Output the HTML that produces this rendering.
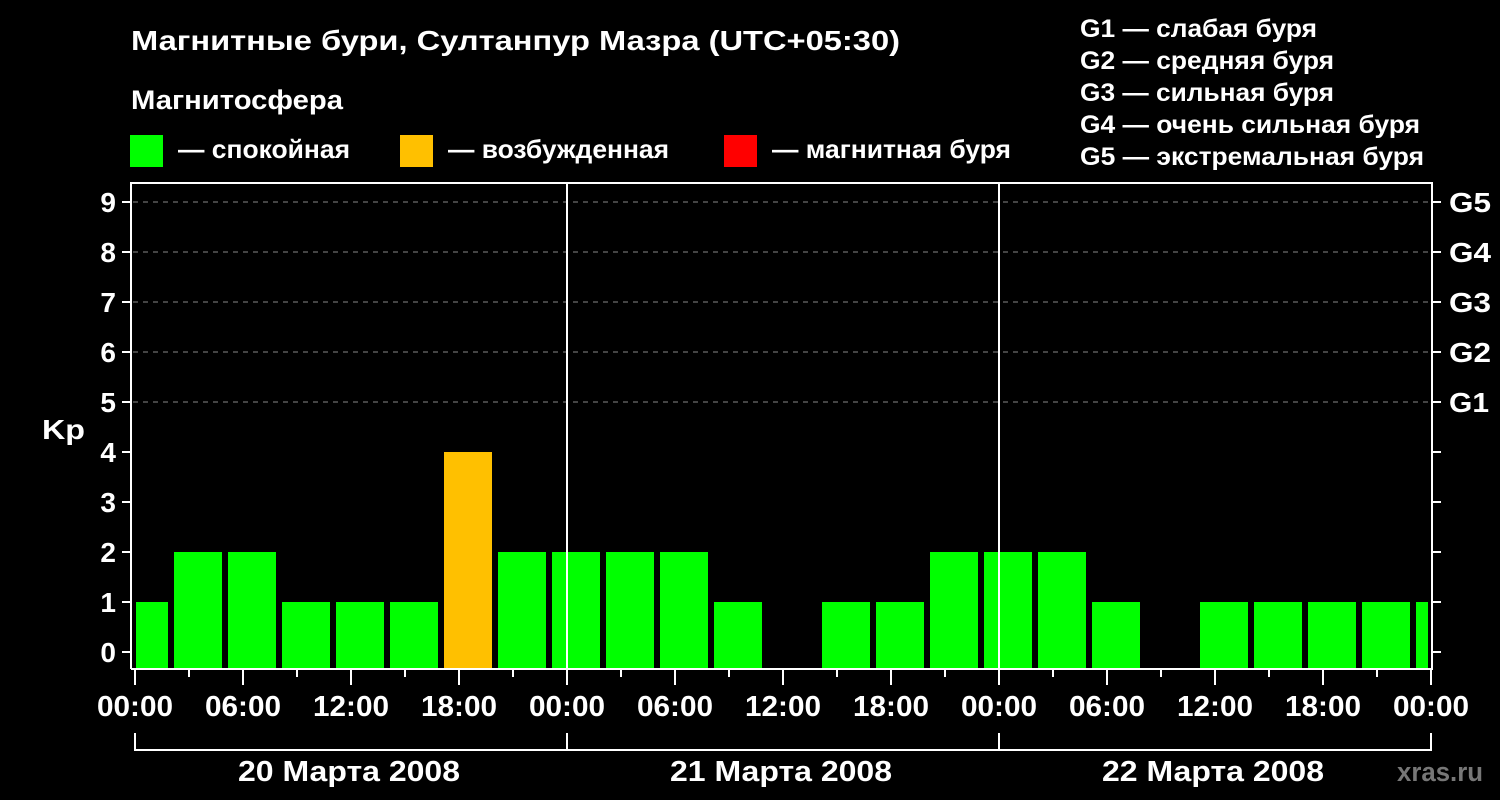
<!DOCTYPE html>
<html><head><meta charset="utf-8"><style>html,body{margin:0;padding:0;background:#000;}svg{display:block}</style></head>
<body>
<svg width="1500" height="800" viewBox="0 0 1500 800" xmlns="http://www.w3.org/2000/svg" font-family="Liberation Sans, Arial, sans-serif" font-weight="bold" fill="#fff">
<rect width="1500" height="800" fill="#000"/>
<text x="131" y="50" font-size="28" textLength="769" lengthAdjust="spacingAndGlyphs">Магнитные бури, Султанпур Мазра (UTC+05:30)</text>
<text x="131" y="109" font-size="27" textLength="212" lengthAdjust="spacingAndGlyphs">Магнитосфера</text>
<rect x="130" y="135" width="33" height="32" fill="#00ff00"/>
<text x="178" y="158" font-size="26" textLength="172" lengthAdjust="spacingAndGlyphs">— спокойная</text>
<rect x="400" y="135" width="33" height="32" fill="#ffc000"/>
<text x="448" y="158" font-size="26" textLength="221" lengthAdjust="spacingAndGlyphs">— возбужденная</text>
<rect x="724" y="135" width="33" height="32" fill="#ff0000"/>
<text x="772" y="158" font-size="26" textLength="239" lengthAdjust="spacingAndGlyphs">— магнитная буря</text>
<g font-size="25">
<text x="1080" y="37" textLength="237" lengthAdjust="spacingAndGlyphs">G1 — слабая буря</text>
<text x="1080" y="69" textLength="254" lengthAdjust="spacingAndGlyphs">G2 — средняя буря</text>
<text x="1080" y="101" textLength="254" lengthAdjust="spacingAndGlyphs">G3 — сильная буря</text>
<text x="1080" y="133" textLength="340" lengthAdjust="spacingAndGlyphs">G4 — очень сильная буря</text>
<text x="1080" y="165" textLength="344" lengthAdjust="spacingAndGlyphs">G5 — экстремальная буря</text>
</g>
<g stroke="#888" stroke-width="1" stroke-dasharray="5,5">
<line x1="133" y1="202" x2="1431" y2="202"/>
<line x1="133" y1="252" x2="1431" y2="252"/>
<line x1="133" y1="302" x2="1431" y2="302"/>
<line x1="133" y1="352" x2="1431" y2="352"/>
<line x1="133" y1="402" x2="1431" y2="402"/>
</g>
<g fill="#00ff00">
<rect x="136" y="602" width="32" height="66"/>
<rect x="174" y="552" width="48" height="116"/>
<rect x="228" y="552" width="48" height="116"/>
<rect x="282" y="602" width="48" height="66"/>
<rect x="336" y="602" width="48" height="66"/>
<rect x="390" y="602" width="48" height="66"/>
<rect x="444" y="452" width="48" height="216" fill="#ffc000"/>
<rect x="498" y="552" width="48" height="116"/>
<rect x="552" y="552" width="48" height="116"/>
<rect x="606" y="552" width="48" height="116"/>
<rect x="660" y="552" width="48" height="116"/>
<rect x="714" y="602" width="48" height="66"/>
<rect x="822" y="602" width="48" height="66"/>
<rect x="876" y="602" width="48" height="66"/>
<rect x="930" y="552" width="48" height="116"/>
<rect x="984" y="552" width="48" height="116"/>
<rect x="1038" y="552" width="48" height="116"/>
<rect x="1092" y="602" width="48" height="66"/>
<rect x="1200" y="602" width="48" height="66"/>
<rect x="1254" y="602" width="48" height="66"/>
<rect x="1308" y="602" width="48" height="66"/>
<rect x="1362" y="602" width="48" height="66"/>
<rect x="1416" y="602" width="12" height="66"/>
</g>
<g stroke="#fff" stroke-width="2" fill="none">
<polyline points="131,669 131,183 1432,183 1432,669 131,669"/>
<line x1="567" y1="183" x2="567" y2="668"/>
<line x1="999" y1="183" x2="999" y2="668"/>
</g>
<g stroke="#fff" stroke-width="2">
<line x1="122" y1="202" x2="131" y2="202"/><line x1="122" y1="252" x2="131" y2="252"/><line x1="122" y1="302" x2="131" y2="302"/><line x1="122" y1="352" x2="131" y2="352"/><line x1="122" y1="402" x2="131" y2="402"/><line x1="122" y1="452" x2="131" y2="452"/><line x1="122" y1="502" x2="131" y2="502"/><line x1="122" y1="552" x2="131" y2="552"/><line x1="122" y1="602" x2="131" y2="602"/><line x1="122" y1="652" x2="131" y2="652"/>
<line x1="1432" y1="202" x2="1441" y2="202"/><line x1="1432" y1="252" x2="1441" y2="252"/><line x1="1432" y1="302" x2="1441" y2="302"/><line x1="1432" y1="352" x2="1441" y2="352"/><line x1="1432" y1="402" x2="1441" y2="402"/><line x1="1432" y1="452" x2="1441" y2="452"/><line x1="1432" y1="502" x2="1441" y2="502"/><line x1="1432" y1="552" x2="1441" y2="552"/><line x1="1432" y1="602" x2="1441" y2="602"/><line x1="1432" y1="652" x2="1441" y2="652"/>
<line x1="135" y1="669" x2="135" y2="685"/><line x1="189" y1="669" x2="189" y2="677"/><line x1="243" y1="669" x2="243" y2="685"/><line x1="297" y1="669" x2="297" y2="677"/><line x1="351" y1="669" x2="351" y2="685"/><line x1="405" y1="669" x2="405" y2="677"/><line x1="459" y1="669" x2="459" y2="685"/><line x1="513" y1="669" x2="513" y2="677"/>
<line x1="567" y1="669" x2="567" y2="685"/><line x1="621" y1="669" x2="621" y2="677"/><line x1="675" y1="669" x2="675" y2="685"/><line x1="729" y1="669" x2="729" y2="677"/><line x1="783" y1="669" x2="783" y2="685"/><line x1="837" y1="669" x2="837" y2="677"/><line x1="891" y1="669" x2="891" y2="685"/><line x1="945" y1="669" x2="945" y2="677"/>
<line x1="999" y1="669" x2="999" y2="685"/><line x1="1053" y1="669" x2="1053" y2="677"/><line x1="1107" y1="669" x2="1107" y2="685"/><line x1="1161" y1="669" x2="1161" y2="677"/><line x1="1215" y1="669" x2="1215" y2="685"/><line x1="1269" y1="669" x2="1269" y2="677"/><line x1="1323" y1="669" x2="1323" y2="685"/><line x1="1377" y1="669" x2="1377" y2="677"/><line x1="1431" y1="669" x2="1431" y2="685"/>
</g>
<g stroke="#fff" stroke-width="2" fill="none">
<polyline points="135,733 135,750 1431,750 1431,733"/>
<line x1="567" y1="733" x2="567" y2="750"/>
<line x1="999" y1="733" x2="999" y2="750"/>
</g>
<g font-size="28" text-anchor="end">
<text x="116" y="212">9</text><text x="116" y="262">8</text><text x="116" y="312">7</text><text x="116" y="362">6</text><text x="116" y="412">5</text><text x="116" y="462">4</text><text x="116" y="512">3</text><text x="116" y="562">2</text><text x="116" y="612">1</text><text x="116" y="662">0</text>
</g>
<text x="42" y="439" font-size="28" textLength="43" lengthAdjust="spacingAndGlyphs">Kp</text>
<g font-size="28">
<text x="1449" y="212" textLength="42" lengthAdjust="spacingAndGlyphs">G5</text><text x="1449" y="262" textLength="42" lengthAdjust="spacingAndGlyphs">G4</text><text x="1449" y="312" textLength="42" lengthAdjust="spacingAndGlyphs">G3</text><text x="1449" y="362" textLength="42" lengthAdjust="spacingAndGlyphs">G2</text><text x="1449" y="412" textLength="40" lengthAdjust="spacingAndGlyphs">G1</text>
</g>
<g font-size="29" text-anchor="middle">
<text x="135" y="716" textLength="76" lengthAdjust="spacingAndGlyphs">00:00</text><text x="243" y="716" textLength="76" lengthAdjust="spacingAndGlyphs">06:00</text><text x="351" y="716" textLength="76" lengthAdjust="spacingAndGlyphs">12:00</text><text x="459" y="716" textLength="76" lengthAdjust="spacingAndGlyphs">18:00</text>
<text x="567" y="716" textLength="76" lengthAdjust="spacingAndGlyphs">00:00</text><text x="675" y="716" textLength="76" lengthAdjust="spacingAndGlyphs">06:00</text><text x="783" y="716" textLength="76" lengthAdjust="spacingAndGlyphs">12:00</text><text x="891" y="716" textLength="76" lengthAdjust="spacingAndGlyphs">18:00</text>
<text x="999" y="716" textLength="76" lengthAdjust="spacingAndGlyphs">00:00</text><text x="1107" y="716" textLength="76" lengthAdjust="spacingAndGlyphs">06:00</text><text x="1215" y="716" textLength="76" lengthAdjust="spacingAndGlyphs">12:00</text><text x="1323" y="716" textLength="76" lengthAdjust="spacingAndGlyphs">18:00</text><text x="1431" y="716" textLength="76" lengthAdjust="spacingAndGlyphs">00:00</text>
<text x="349" y="781" textLength="222" lengthAdjust="spacingAndGlyphs">20 Марта 2008</text>
<text x="781" y="781" textLength="222" lengthAdjust="spacingAndGlyphs">21 Марта 2008</text>
<text x="1213" y="781" textLength="222" lengthAdjust="spacingAndGlyphs">22 Марта 2008</text>
</g>
<text x="1483" y="781" font-size="27" fill="#777" text-anchor="end" textLength="86" lengthAdjust="spacingAndGlyphs">xras.ru</text>
</svg>
</body></html>
